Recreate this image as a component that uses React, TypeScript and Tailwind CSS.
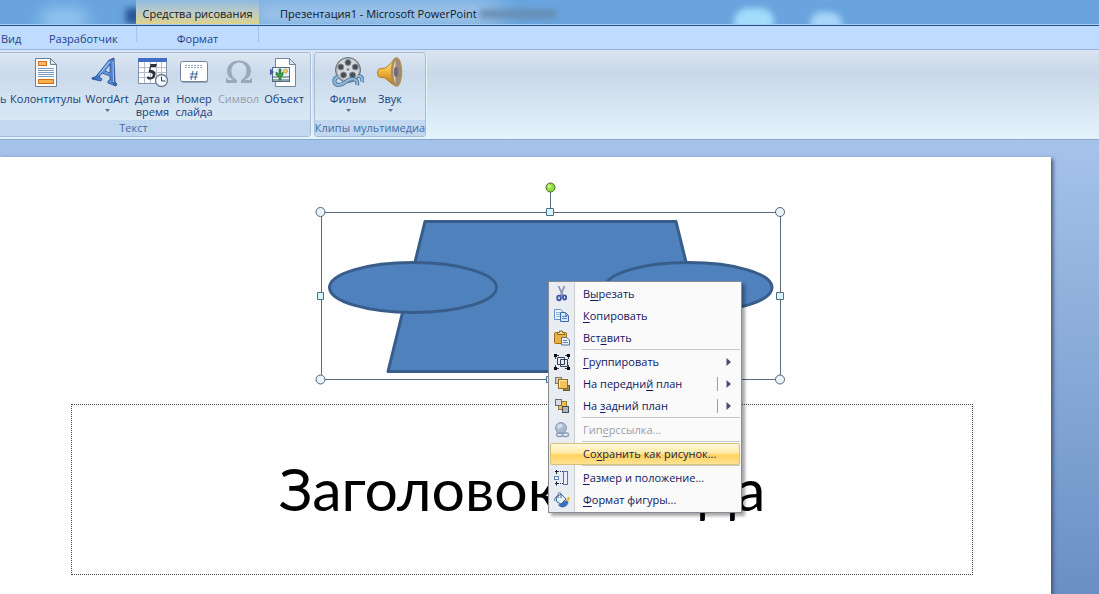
import type { ReactNode } from "react";

function HeaderFooterIcon() {
  return (
    <svg width="32" height="32" viewBox="0 0 32 32" aria-hidden="true">
      <path d="M5.5 1.5h15l6 6v22h-21z" fill="#fff" stroke="#6d7f96" />
      <path d="M20.500 1.500v6h6z" fill="#dbe5f2" stroke="#6d7f96" />
      <rect x="8.500" y="4.500" width="8" height="4" fill="#fbb97a" stroke="#d56a13" />
      <path d="M8 11.500h16M8 13.500h16M8 15.500h16M8 17.500h16M8 19.500h16" stroke="#7d9cc4" />
      <rect x="8.500" y="22.500" width="15" height="4" fill="#fbb24e" stroke="#d56a13" />
    </svg>
  );
}

function WordArtIcon() {
  return (
    <svg width="32" height="32" viewBox="0 0 32 32" aria-hidden="true">
      <defs>
        <linearGradient id="wa" x1="0" x2="1">
          <stop offset="0" stopColor="#2c5eb5" />
          <stop offset=".6" stopColor="#6da4ea" />
          <stop offset="1" stopColor="#2c59a8" />
        </linearGradient>
      </defs>
      <path
        d="M1 21c3-1 5-2 6-4L18 3l5-2 1 24 2 2-1 2-8-3v-2l2-1v-4l-8-3-3 4 3 2-1 2-9-2zM14 14l5 2V7z"
        fill="url(#wa)"
        stroke="#23488c"
        strokeWidth=".8"
      />
      <path d="M18.500 4.500L8 18M22 4l.5 21" stroke="#a9cdf8" fill="none" />
    </svg>
  );
}

function DateIcon() {
  return (
    <svg width="32" height="32" viewBox="0 0 32 32" aria-hidden="true">
      <rect x="1.500" y="1.500" width="28" height="25" fill="#fff" stroke="#7f90a8" />
      <rect x="1" y="1" width="29" height="4" fill="#3e6fc4" />
      <path d="M2 10.500h27M2 15.500h27M2 20.500h27M7.500 5v21M13.500 5v21M19.500 5v21M24.500 5v21" stroke="#b4bdca" />
      <path d="M20 7l-1 3h-5l-.7 3c4 0 5.700 2 5.200 5-.5 3-3 4.500-6 4.500-1.500 0-2.500-.8-2.500-1.800s1-1.500 2-1c1 .6 2 1 3 0 1.700-1.700.8-4.200-3.500-4.200l2-8.500z" fill="#2e3239" />
      <circle cx="24.500" cy="23.500" r="6" fill="#f3f6fa" stroke="#6b7c92" strokeWidth="1.400" />
      <path d="M24.500 19.500v4.500h4" stroke="#33435c" fill="none" />
    </svg>
  );
}

function SlideNumberIcon() {
  return (
    <svg width="32" height="32" viewBox="0 0 32 32" aria-hidden="true">
      <rect x="3" y="6" width="27" height="20" rx="2" fill="#9aa9bb" />
      <rect x="2.500" y="4.500" width="27" height="20" rx="2" fill="#fff" stroke="#70839b" />
      <path d="M7 8.500h18M7 10.500h18" stroke="#93a8c3" strokeDasharray="2 1" />
      <path d="M15 14l-2 9M19 14l-2 9M12 17h8M11.500 20h8" stroke="#45689d" fill="none" />
    </svg>
  );
}

function SymbolIcon() {
  return (
    <svg width="32" height="32" viewBox="0 0 32 32" aria-hidden="true">
      <path
        d="M3 26v-5h1l1 2h5c-4-2-6-5-6-9C4 8 9 3.500 16 3.500S28 8 28 14c0 4-2 7-6 9h5l1-2h1v5H18v-3c4-2 5.500-5 5.500-9 0-5-3-8.500-7.500-8.500S8.500 9 8.500 14c0 4 1.500 7 5.500 9v3z"
        fill="#9aa8ba"
      />
    </svg>
  );
}

function ObjectIcon() {
  return (
    <svg width="32" height="32" viewBox="0 0 32 32" aria-hidden="true">
      <path d="M7.500 1.500h14l6 6v22h-20z" fill="#fff" stroke="#72859d" />
      <path d="M21.500 1.500v6h6z" fill="#dde6f1" stroke="#72859d" />
      <rect x="4.500" y="10.500" width="17" height="14" fill="#e4f1f9" stroke="#536b81" />
      <path d="M5 19h16v5H5z" fill="#94a6aa" />
      <path d="M5 21.500h16" stroke="#f2f6f8" />
      <circle cx="17.500" cy="14" r="2" fill="#f1d179" stroke="#b28c31" strokeWidth=".7" />
      <path d="M11 12h2v5l2-2v3l-2 2v3h-2v-3l-3-2v-3l3 2z" fill="#3c9c43" stroke="#257a31" strokeWidth=".7" />
      <path d="M2 11.500l4 3.500-4 3.500z" fill="#385fae" />
    </svg>
  );
}

function FilmIcon() {
  return (
    <svg width="32" height="32" viewBox="0 0 32 32" aria-hidden="true">
      <circle cx="16" cy="13" r="12.500" fill="#a7adb4" stroke="#686f78" />
      <circle cx="16" cy="12.500" r="10.800" fill="#d5d9dc" />
      <g fill="#484d55" stroke="#868c94">
        <circle cx="16" cy="5.500" r="3" />
        <circle cx="8.800" cy="10" r="3" />
        <circle cx="11.500" cy="18" r="3" />
        <circle cx="20.500" cy="18" r="3" />
        <circle cx="23.300" cy="10" r="3" />
      </g>
      <circle cx="16" cy="12.500" r="1.300" fill="#777e87" />
      <path
        d="M6 20c-5 1-5 8 1 8 6 0 7-6 13-6 4 0 6 2 5 6M26 19c4 0 5 3 4 6"
        fill="none"
        stroke="#426d96"
        strokeWidth="4"
      />
      <path
        d="M6 20c-5 1-5 8 1 8 6 0 7-6 13-6 4 0 6 2 5 6M26 19c4 0 5 3 4 6"
        fill="none"
        stroke="#8db5d8"
        strokeWidth="2.400"
      />
    </svg>
  );
}

function SoundIcon() {
  return (
    <svg width="32" height="32" viewBox="0 0 32 32" aria-hidden="true">
      <defs>
        <linearGradient id="horn" x2="0" y2="1">
          <stop offset="0" stopColor="#fff0a8" />
          <stop offset=".45" stopColor="#f3bd43" />
          <stop offset="1" stopColor="#b46c14" />
        </linearGradient>
      </defs>
      <path d="M5 12l6-1C15 9 18 5 21 1l2 28c-5-1-8-5-12-8l-6-1c-2-2-2-6 0-8z" fill="url(#horn)" stroke="#b87c20" />
      <ellipse cx="22.500" cy="15" rx="5" ry="14" fill="#9d8b7d" stroke="#b29055" strokeWidth="1.500" />
      <path d="M21.500 3c-3 5-3 18 0 24z" fill="#e5cf9f" />
      <ellipse cx="22" cy="15" rx="2.200" ry="5" fill="#76697c" />
    </svg>
  );
}

function DownArrow() {
  return (
    <svg width="5" height="3" viewBox="0 0 5 3" className="mt-1" aria-hidden="true">
      <path d="M0 0h5L2.500 3z" fill="#586f93" />
    </svg>
  );
}

type ToolProps = {
  icon: ReactNode;
  lines: string[];
  width: string;
  arrow?: boolean;
  disabled?: boolean;
};

function Tool({ icon, lines, width, arrow, disabled }: ToolProps) {
  return (
    <button
      type="button"
      disabled={disabled}
      className={`flex shrink-0 flex-col items-center whitespace-nowrap leading-[13px] ${width} ${
        disabled ? "text-[#929eae]" : "text-[#21407a]"
      }`}
    >
      {icon}
      <span className="mt-[3px]">{lines[0]}</span>
      {lines[1] && <span>{lines[1]}</span>}
      {arrow && <DownArrow />}
    </button>
  );
}

function Group({ label, className, children }: { label: string; className: string; children: ReactNode }) {
  return (
    <section
      aria-label={label}
      className={`flex h-[85px] shrink-0 flex-col overflow-hidden rounded-[3px] border border-[#a5bcd6] bg-linear-to-b from-[#dde6f2] from-0% via-[#cbdaeb] via-25% to-[#dfedf9] shadow-[1px_0_0_#e9f2fb] ${className}`}
    >
      <div className="flex flex-1 items-start pt-1">{children}</div>
      <h2 className="flex h-4 justify-center bg-[#c1d8f0] leading-4 whitespace-nowrap text-[#456ca4]">{label}</h2>
    </section>
  );
}

function CutIcon() {
  return (
    <svg width="16" height="16" viewBox="0 0 16 16" aria-hidden="true">
      <path d="M4.500 0l4.500 10M10.500 0L6.500 10" stroke="#8796ae" strokeWidth="1.800" fill="none" />
      <ellipse cx="5" cy="12" rx="1.800" ry="2.300" fill="none" stroke="#3852a4" strokeWidth="1.800" />
      <ellipse cx="10.500" cy="11.500" rx="1.600" ry="2.100" fill="none" stroke="#3852a4" strokeWidth="1.800" />
    </svg>
  );
}

function CopyIcon() {
  return (
    <svg width="16" height="16" viewBox="0 0 16 16" aria-hidden="true">
      <path d="M.5 1.500h6l2.500 2v8H.5z" fill="#edf5ff" stroke="#6290ca" />
      <path d="M2 4.500h4M2 6.500h4M2 8.500h4" stroke="#8db1dc" />
      <path d="M6.500 4.500h5l3 3v6h-8z" fill="#d6e7ff" stroke="#3c6bb2" />
      <path d="M11.500 4.500v3h3M8 8.500h5M8 10.500h5" stroke="#5d88c4" fill="none" />
    </svg>
  );
}

function PasteIcon() {
  return (
    <svg width="16" height="16" viewBox="0 0 16 16" aria-hidden="true">
      <rect x=".5" y="2.500" width="12" height="11" rx="1" fill="#e9b145" stroke="#a46b18" />
      <path d="M3.500 4.500v-2h2V1h3v1.500h2v2z" fill="#f7df87" stroke="#886526" />
      <path d="M7.500 7.500h5l3 2.500v5h-8z" fill="#e6effb" stroke="#5a7296" />
      <path d="M9 10.500h4M9 12.500h5" stroke="#6285b5" />
    </svg>
  );
}

function GroupIcon() {
  return (
    <svg width="16" height="16" viewBox="0 0 16 16" aria-hidden="true">
      <path d="M3 1.500h2M11 1.500h2M3 14.500h2M11 14.500h2M1.500 3v2M1.500 11v2M14.500 3v2M14.500 11v2" stroke="#37404c" />
      <path d="M3.500 3.500h7v7h-7zM6.500 5.500h7v7h-7z" fill="none" stroke="#2d4057" />
      <path d="M0 0h3v3H0zM13 0h3v3h-3zM0 13h3v3H0zM13 13h3v3h-3z" fill="#080c12" />
    </svg>
  );
}

function FrontIcon() {
  return (
    <svg width="16" height="16" viewBox="0 0 16 16" aria-hidden="true">
      <rect x="1.500" y="1.500" width="6" height="6" fill="#d4cdb9" stroke="#7c776b" />
      <rect x="9.500" y="9.500" width="6" height="5" fill="#9e8b54" stroke="#65562f" />
      <rect x="4.500" y="3.500" width="9" height="9" fill="#f3c45a" stroke="#8f6a20" />
      <path d="M5.500 11.500v-7h7" stroke="#ffeaa5" fill="none" />
    </svg>
  );
}

function BackIcon() {
  return (
    <svg width="16" height="16" viewBox="0 0 16 16" aria-hidden="true">
      <rect x="4.500" y="3.500" width="8" height="8" fill="#f2bd49" stroke="#9a782e" />
      <rect x="1.500" y="1.500" width="6" height="6" fill="#dadde2" stroke="#666d78" />
      <rect x="8.500" y="8.500" width="6" height="6" fill="#aeb4bd" stroke="#464d58" />
    </svg>
  );
}

function LinkIcon() {
  return (
    <svg width="16" height="16" viewBox="0 0 16 16" aria-hidden="true">
      <circle cx="7" cy="6" r="5.500" fill="#a9b7cf" stroke="#8b9cba" />
      <path d="M3 4c2-3 5-2 6-1L7 6 4 7z" fill="#d4dce9" />
      <rect x="2.500" y="11" width="6" height="3.500" rx="1.700" fill="none" stroke="#899bb8" strokeWidth="1.400" />
      <rect x="8.500" y="11" width="6" height="3.500" rx="1.700" fill="none" stroke="#899bb8" strokeWidth="1.400" />
    </svg>
  );
}

function SizeIcon() {
  return (
    <svg width="16" height="16" viewBox="0 0 16 16" aria-hidden="true">
      <path d="M4 1.500h5M4 13.500h5" stroke="#27364f" strokeDasharray="1 1" />
      <path d="M2.500 0v4M1 1.500h3M2.500 11.500v4M1 13.500h3" stroke="#17202e" />
      <rect x=".5" y="6.500" width="4" height="3" fill="#fff" stroke="#6281ab" />
      <rect x="9.500" y="1.500" width="4" height="13" fill="#e6f0fc" stroke="#5576a7" />
    </svg>
  );
}

function FormatIcon() {
  return (
    <svg width="16" height="16" viewBox="0 0 16 16" aria-hidden="true">
      <path d="M2 5l5-3 5 5-5 5-4-2z" fill="#e4effc" stroke="#456998" />
      <path d="M4 6V2.500C4 0 7 0 7 2.500V6M1 9c-1-2 0-4 2-4" fill="none" stroke="#456998" />
      <path d="M15.500 5.500l-4 5" stroke="#edb93c" strokeWidth="2.500" />
      <path d="M12.500 9c-3 0-4 4-8 4 3 3.500 8.500 2 9.500-2.500z" fill="#3673ca" stroke="#244e91" strokeWidth=".7" />
    </svg>
  );
}

type ItemProps = {
  icon?: ReactNode;
  before?: string;
  hot: string;
  after: string;
  submenu?: boolean;
  split?: boolean;
  disabled?: boolean;
  active?: boolean;
};

function Item({ icon, before, hot, after, submenu, split, disabled, active }: ItemProps) {
  return (
    <button
      type="button"
      role="menuitem"
      disabled={disabled}
      className={`flex h-[22px] w-full items-center whitespace-nowrap pr-[9px] text-left ${
        active
          ? "rounded-xs bg-[linear-gradient(#fffbe2,#ffeaa6_45%,#ffd25c_55%,#ffe69a)] text-[#241c4b] outline outline-[#d9c07a] -outline-offset-1"
          : disabled
            ? "text-[#9b9ea8]"
            : "text-[#10175c]"
      }`}
    >
      <span className="flex w-[33px] shrink-0 pl-1">{icon}</span>
      <span className="flex-1">
        {before}
        <span className="underline underline-offset-2">{hot}</span>
        {after}
      </span>
      {split && <span className="mr-2 h-3.5 w-px bg-[#9aa0aa]" />}
      {submenu && (
        <svg width="5" height="8" viewBox="0 0 5 8" aria-hidden="true">
          <path d="M.5 0v8L5 4z" fill="#484e77" />
        </svg>
      )}
    </button>
  );
}

function Separator() {
  return <div role="separator" className="ml-8 h-0.5 border-t border-[#c5c9ce]" />;
}

function ContextMenu() {
  return (
    <div
      role="menu"
      aria-label="Фигура"
      className="absolute left-[548px] top-[124px] w-[194px] border border-[#858b94] bg-[linear-gradient(to_right,#e9edf1_25px,#c9cdd2_25px,#c9cdd2_26px,#fafafb_26px)] p-px shadow-[3px_3px_3px_rgba(0,0,0,0.35)]"
    >
      <Item icon={<CutIcon />} before="В" hot="ы" after="резать" />
      <Item icon={<CopyIcon />} hot="К" after="опировать" />
      <Item icon={<PasteIcon />} before="Вст" hot="а" after="вить" />
      <Separator />
      <Item icon={<GroupIcon />} hot="Г" after="руппировать" submenu />
      <Item icon={<FrontIcon />} before="На передни" hot="й" after=" план" submenu split />
      <Item icon={<BackIcon />} before="На " hot="з" after="адний план" submenu split />
      <Separator />
      <Item icon={<LinkIcon />} before="Гип" hot="е" after="рссылка..." disabled />
      <Separator />
      <Item before="Со" hot="х" after="ранить как рисунок..." active />
      <Separator />
      <Item icon={<SizeIcon />} hot="Р" after="азмер и положение..." />
      <Item icon={<FormatIcon />} hot="Ф" after="ормат фигуры..." />
    </div>
  );
}

function Shapes() {
  return (
    <svg
      width="474"
      height="208"
      viewBox="314 180 474 208"
      className="absolute left-[314px] top-[23px]"
      role="img"
      aria-label="Сгруппированные фигуры"
    >
      <g fill="#4f81bd" stroke="#385d8a" strokeWidth="3" strokeLinejoin="round">
        <path d="M425 221.500h251L713 371.500H388z" />
        <ellipse cx="413" cy="287.500" rx="83.500" ry="25" />
        <ellipse cx="688.500" cy="287.500" rx="83.500" ry="25" />
      </g>
      <g fill="none" stroke="#5b6b80">
        <path d="M321.500 212.500h459v167h-459zM550.500 192v18" />
      </g>
      <g fill="#e8f3f7" stroke="#50657d">
        <circle cx="320.500" cy="212" r="4.500" />
        <circle cx="780" cy="212" r="4.500" />
        <circle cx="320.500" cy="379.500" r="4.500" />
        <circle cx="780" cy="379.500" r="4.500" />
      </g>
      <g fill="#d9f3fa" stroke="#4b7289">
        <path d="M546.500 208.500h7v7h-7zM317.500 292.500h6v7h-6zM776.500 292.500h7v7h-7zM546.500 376.500h7v6h-7z" />
      </g>
      <circle cx="550.500" cy="187.500" r="4.500" fill="#8fdc3c" stroke="#45682f" />
      <circle cx="549.500" cy="186.500" r="2" fill="#c2f487" />
    </svg>
  );
}

export default function App() {
  return (
    <div className="flex min-h-screen flex-col overflow-hidden bg-linear-to-b from-[#a4c2ea] from-25% to-[#6a90c3] font-['Open_Sans','Noto_Sans',sans-serif] text-[11px]">
      <header>
        <div className="relative flex h-[25px] items-stretch overflow-hidden border-b border-[#a9cdf0] bg-[#69a4de] pl-[136px] whitespace-nowrap text-[#111722]">
          <span className="absolute left-10 top-2 h-6 w-12 rounded-full bg-[#92c6ef] blur-sm" />
          <span className="absolute left-[126px] top-2 h-4 w-4 bg-[#2c5596] blur-[3px]" />
          <span className="absolute left-[250px] top-1 h-5 w-[250px] bg-[#b5d3ed] blur-md" />
          <span className="absolute left-[480px] top-2.5 h-2 w-[76px] bg-[#668baf] blur-[3px]" />
          <span className="absolute left-[734px] top-2 h-7 w-10 rounded-full bg-[#a1dcfb] blur-[3px]" />
          <span className="absolute left-[810px] top-3 h-6 w-8 rounded-full bg-[#a7d5fa] blur-[3px]" />
          <div className="relative flex w-[123px] justify-center bg-linear-to-b from-[#8fb9e0] via-[#bccbc6] to-[#ddd28b] pt-1.5 leading-4">
            Средства рисования
          </div>
          <h1 className="relative ml-[21px] pt-1.5 leading-4">Презентация1 - Microsoft PowerPoint</h1>
        </div>
        <nav
          aria-label="Вкладки ленты"
          className="flex h-6 items-start border-t border-[#23568e] bg-[#bfdbff] leading-[25px] text-[#1d428b]"
        >
          <a href="#view" className="w-[49px] pl-px">Вид</a>
          <a href="#developer" className="w-[87px]">Разработчик</a>
          <a href="#format" className="h-4 w-[123px] border-x border-[#a9c2de] text-center">Формат</a>
        </nav>
        <div className="flex h-[91px] items-start gap-[3px] overflow-hidden border-y border-t-[#95b5da] border-b-[#8aa8cc] bg-linear-to-b from-[#dbe4f1] from-0% via-[#c8d8e8] via-25% to-[#e3f4fd] pt-0.5">
          <Group label="Текст" className="-ml-11 w-[355px]">
            <span className="ml-[43px] mt-[35px] w-[9px] shrink-0 leading-[13px] text-[#21407a]">ь</span>
            <Tool icon={<HeaderFooterIcon />} lines={["Колонтитулы"]} width="w-[73px]" />
            <Tool icon={<WordArtIcon />} lines={["WordArt"]} width="w-[50px]" arrow />
            <Tool icon={<DateIcon />} lines={["Дата и", "время"]} width="w-[41px]" />
            <Tool icon={<SlideNumberIcon />} lines={["Номер", "слайда"]} width="w-[42px]" />
            <Tool icon={<SymbolIcon />} lines={["Символ"]} width="w-[47px]" disabled />
            <Tool icon={<ObjectIcon />} lines={["Объект"]} width="w-[44px]" />
          </Group>
          <Group label="Клипы мультимедиа" className="w-[112px]">
            <span className="w-3" />
            <Tool icon={<FilmIcon />} lines={["Фильм"]} width="w-[42px]" arrow />
            <Tool icon={<SoundIcon />} lines={["Звук"]} width="w-[42px]" arrow />
          </Group>
        </div>
      </header>
      <main className="flex flex-1 pr-12 pt-[17px]">
        <article className="relative flex-1 bg-white pl-[71px] pr-[78px] pt-[247px] shadow-[2px_2px_4px_#3c5575]">
          <Shapes />
          <div className="flex h-[171px] items-center justify-center border border-dotted border-[#444] font-['Lato',sans-serif] text-[59px] whitespace-nowrap text-black">
            Заголовок слайда
          </div>
          <ContextMenu />
        </article>
      </main>
    </div>
  );
}
